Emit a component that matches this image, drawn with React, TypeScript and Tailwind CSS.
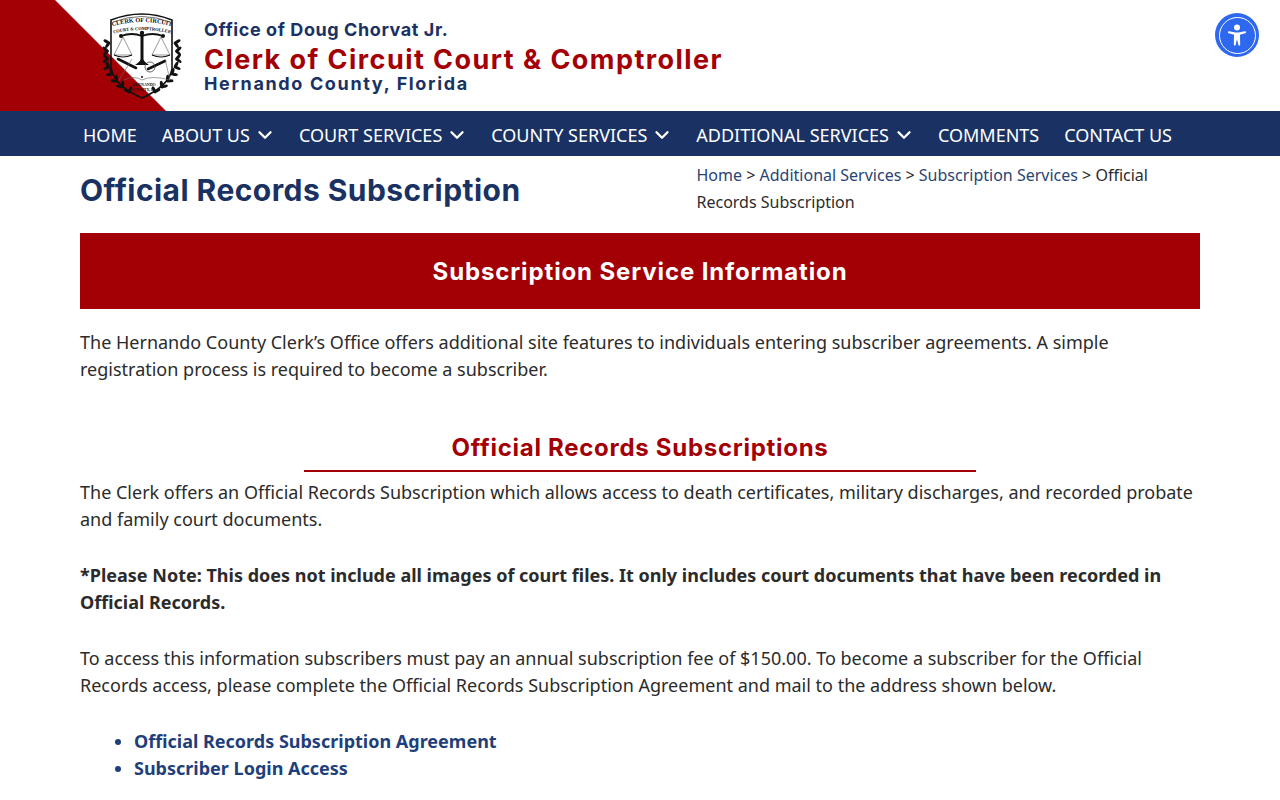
import { ChevronDown } from "lucide-react";

const nav: [string, boolean][] = [
  ["HOME", false],
  ["ABOUT US", true],
  ["COURT SERVICES", true],
  ["COUNTY SERVICES", true],
  ["ADDITIONAL SERVICES", true],
  ["COMMENTS", false],
  ["CONTACT US", false],
];

const laurel: [number, number, number][] = [
  [109, 42, 80],
  [107.5, 50, 90],
  [107.5, 58, 100],
  [109, 66, 112],
  [112, 73, 125],
  [116.5, 80, 138],
  [122, 86, 150],
  [129, 91, 165],
];

function Logo() {
  const serif = "'Liberation Serif', serif";
  return (
    <svg width="80" height="90" viewBox="102 10 80 90" className="shrink-0">
      {laurel.map(([x, y, a], i) => (
        <g key={i}>
          <g fill="#111">
            <ellipse cx={x - 2.4} cy={y} rx="3.8" ry="1.6" transform={`rotate(${a - 50} ${x} ${y})`} />
            <ellipse cx={x + 2.4} cy={y} rx="3.6" ry="1.5" transform={`rotate(${a + 45} ${x} ${y})`} />
          </g>
          <g fill="#111" transform="translate(284 0) scale(-1 1)">
            <ellipse cx={x - 2.4} cy={y} rx="3.8" ry="1.6" transform={`rotate(${a - 50} ${x} ${y})`} />
            <ellipse cx={x + 2.4} cy={y} rx="3.6" ry="1.5" transform={`rotate(${a + 45} ${x} ${y})`} />
          </g>
        </g>
      ))}
      <path d="M111 19 Q142 7 172 19 L172 68 Q169 85 142 97 Q115 85 111 68 Z" fill="none" stroke="#111" strokeWidth="1.6" />
      <path d="M113 21 Q142 10 170 21" fill="none" stroke="#111" strokeWidth="0.6" />
      <defs>
        <path id="arc1" d="M104 28 Q142 14 180 28" />
        <path id="arc2" d="M104 35 Q142 23 180 35" />
      </defs>
      <text fontFamily={serif} fontWeight="700" fontSize="6.2" fill="#111" textAnchor="middle">
        <textPath href="#arc1" startOffset="50%">CLERK OF CIRCUIT</textPath>
      </text>
      <text fontFamily={serif} fontWeight="700" fontSize="4.5" fill="#111" textAnchor="middle">
        <textPath href="#arc2" startOffset="50%">COURT &amp; COMPTROLLER</textPath>
      </text>
      <path d="M121 35 Q132 31 142 35 Q152 31 163 35" fill="none" stroke="#111" strokeWidth="1.8" />
      <circle cx="121" cy="35" r="2" fill="#111" />
      <circle cx="163" cy="35" r="2" fill="#111" />
      <circle cx="142" cy="32" r="2.2" fill="#111" />
      <rect x="140.5" y="32" width="3" height="29" fill="#111" />
      <path d="M135 64 Q141 60 142 56 Q143 60 149 64 Z" fill="#111" />
      <path d="M123 36 L114 54 H132 Z M161 36 L152 54 H170 Z" fill="none" stroke="#555" strokeWidth="0.6" />
      <path d="M114 54 Q123 58 132 54 M152 54 Q161 58 170 54" fill="none" stroke="#111" strokeWidth="1.2" />
      <path d="M118 58 L136 67" stroke="#111" strokeWidth="2.6" strokeLinecap="round" />
      <path d="M165 60 L148 68" stroke="#111" strokeWidth="2.6" strokeLinecap="round" />
      <path d="M119 79 L132 58 M124 79 Q134 74 142 79 Q152 74 170 79 L165 58" fill="none" stroke="#666" strokeWidth="0.6" />
      <circle cx="150" cy="66" r="5" fill="none" stroke="#444" strokeWidth="0.8" />
      <circle cx="142" cy="76" r="1" fill="#111" />
      <text x="144" y="85" textAnchor="middle" fontFamily={serif} fontWeight="700" fontSize="4" fill="#111">HERNANDO</text>
      <text x="144" y="90" textAnchor="middle" fontFamily={serif} fontWeight="700" fontSize="4" fill="#111">COUNTY, FL</text>
    </svg>
  );
}

export default function App() {
  return (
    <div className="bg-white h-screen overflow-hidden font-['Noto_Sans',sans-serif] text-[18px] leading-[27px] text-[#2b2b2b]">
      <header className="relative h-[111px] flex items-center pl-[102px] gap-[22px]">
        <svg width="166" height="111" viewBox="0 0 166 111" className="absolute left-0 top-0">
          <path d="M0 0H55L166 111H0Z" fill="#a30006" />
        </svg>
        <div className="relative"><Logo /></div>
        <div className="relative font-['Inter',sans-serif] font-bold mt-[-3px]">
          <div className="text-[18px] leading-[30px] text-[#1a3263] tracking-[0.58px]">Office of Doug Chorvat Jr.</div>
          <div className="text-[27px] leading-[30px] text-[#a30006] tracking-[1.45px]">Clerk of Circuit Court &amp; Comptroller</div>
          <div className="text-[18px] leading-[18px] text-[#1a3263] tracking-[1.64px]">Hernando County, Florida</div>
        </div>
        <div className="absolute left-[1215px] top-[13px] w-[44px] h-[44px] rounded-full bg-[#2d68ef] flex items-center justify-center">
          <div className="w-[37px] h-[37px] rounded-full border-[1.5px] border-white flex items-center justify-center">
            <svg width="26" height="26" viewBox="0 0 26 26" fill="#fff">
              <circle cx="13" cy="5.5" r="3" />
              <path d="M5.2 9.2 L11.5 10.6 H14.5 L20.8 9.2 A1 1 0 0 1 21.3 11.3 L16 12.8 L16.2 22.8 A1 1 0 0 1 14.4 23.2 L13 17 L11.6 23.2 A1 1 0 0 1 9.8 22.8 L10 12.8 L4.7 11.3 A1 1 0 0 1 5.2 9.2Z" />
            </svg>
          </div>
        </div>
      </header>

      <nav className="h-[45px] bg-[#1a3263] flex items-center pl-[83px] gap-[25px] text-white">
        {nav.map(([label, chevron]) => (
          <div key={label} className="flex items-center gap-[4px] pt-[3px]">
            <span>{label}</span>
            {chevron && <ChevronDown size={22} strokeWidth={2.6} className="mr-[-2px]" />}
          </div>
        ))}
      </nav>

      <main className="px-[80px]">
        <div className="flex h-[77px]">
          <h1 className="w-[617px] shrink-0 pt-[17px] font-['Inter',sans-serif] font-bold text-[30px] leading-[34px] text-[#1a3263] tracking-[0.45px]">Official Records Subscription</h1>
          <div className="w-[470px] ml-[-0.5px] pt-[6px] text-[16px] text-[#2b2b2b]">
            <span className="text-[#2a4474]">Home</span> &gt; <span className="text-[#2a4474]">Additional Services</span> &gt; <span className="text-[#2a4474]">Subscription Services</span> &gt; Official Records Subscription
          </div>
        </div>
        <div className="h-[76px] bg-[#a30006] flex items-center justify-center font-['Inter',sans-serif] font-bold text-[24px] text-white tracking-[0.875px]">Subscription Service Information</div>
        <p className="mt-[20px]">The Hernando County Clerk’s Office offers additional site features to individuals entering subscriber agreements. A simple registration process is required to become a subscriber.</p>
        <div className="mt-[47px] w-[672px] mx-auto border-b-2 border-[#a30006] pb-[4px] text-center font-['Inter',sans-serif] font-bold text-[24px] leading-[36px] text-[#a30006] tracking-[0.72px]">Official Records Subscriptions</div>
        <p className="mt-[7px]">The Clerk offers an Official Records Subscription which allows access to death certificates, military discharges, and recorded probate and family court documents.</p>
        <p className="mt-[29px] font-bold">*Please Note: This does not include all images of court files. It only includes court documents that have been recorded in Official Records.</p>
        <p className="mt-[29px]">To access this information subscribers must pay an annual subscription fee of $150.00. To become a subscriber for the Official Records access, please complete the Official Records Subscription Agreement and mail to the address shown below.</p>
        <ul className="mt-[29px] pl-[54px] list-disc font-bold text-[#1f3f7a]">
          <li>Official Records Subscription Agreement</li>
          <li>Subscriber Login Access</li>
        </ul>
      </main>
    </div>
  );
}
